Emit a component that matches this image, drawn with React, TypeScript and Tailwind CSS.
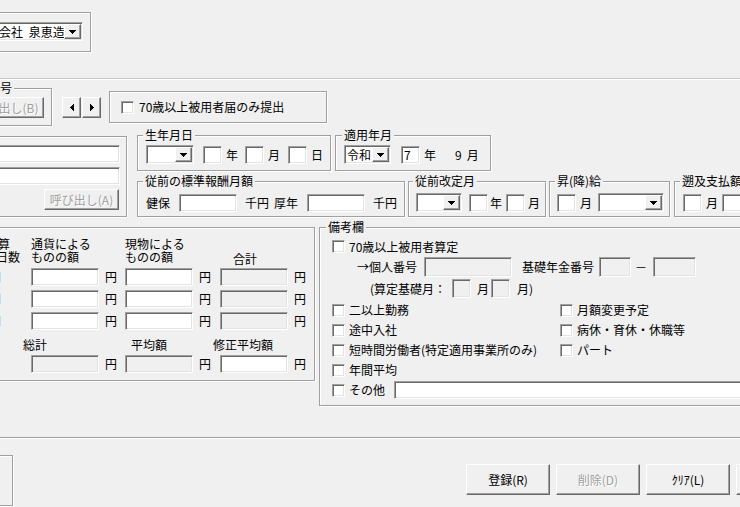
import React from 'react';

const SUNKEN =
  'border border-t-[#a0a0a0] border-l-[#a0a0a0] border-r-white border-b-white shadow-[inset_1px_1px_0_#696969,inset_-1px_-1px_0_#e3e3e3]';
const RAISED =
  'border border-t-white border-l-white border-r-[#696969] border-b-[#696969] shadow-[inset_-1px_-1px_0_#a0a0a0]';
const ETCHED = 'border border-[#a0a0a0] shadow-[inset_1px_1px_0_#fff,1px_1px_0_#fff]';
const DISABLED = 'text-[#a0a0a0] [text-shadow:1px_1px_0_#fff]';

function Tri({ dir }: { dir: 'down' | 'left' | 'right' }) {
  if (dir === 'down')
    return (
      <svg width="7" height="4" viewBox="0 0 7 4" shapeRendering="crispEdges">
        <path d="M0 0h7v1H0zM1 1h5v1H1zM2 2h3v1H2zM3 3h1v1H3z" fill="#000" />
      </svg>
    );
  if (dir === 'left')
    return (
      <svg width="4" height="7" viewBox="0 0 4 7" shapeRendering="crispEdges">
        <path d="M3 0h1v7H3zM2 1h1v5H2zM1 2h1v3H1zM0 3h1v1H0z" fill="#000" />
      </svg>
    );
  return (
    <svg width="4" height="7" viewBox="0 0 4 7" shapeRendering="crispEdges">
      <path d="M0 0h1v7H0zM1 1h1v5H1zM2 2h1v3H2zM3 3h1v1H3z" fill="#000" />
    </svg>
  );
}

function Field({ className = '', gray = false, children }: { className?: string; gray?: boolean; children?: React.ReactNode }) {
  return (
    <div className={`shrink-0 flex items-center pl-[2px] ${gray ? 'bg-[#f0f0f0]' : 'bg-white'} ${SUNKEN} ${className}`}>
      {children}
    </div>
  );
}

function Check() {
  return <div className={`shrink-0 w-[13px] h-[13px] bg-white ${SUNKEN}`} />;
}

function Combo({ className = '', text, textClass = 'pl-[1px]' }: { className?: string; text?: string; textClass?: string }) {
  return (
    <div className={`shrink-0 flex bg-white p-[1px] ${SUNKEN} ${className}`}>
      <div className={`flex-1 flex items-center overflow-hidden whitespace-nowrap ${textClass}`}>{text}</div>
      <div className={`w-[17px] flex items-center justify-center bg-[#f0f0f0] ${RAISED}`}>
        <Tri dir="down" />
      </div>
    </div>
  );
}

function Group({
  legend,
  legendLeft = 'left-[5px]',
  className = '',
  children,
}: {
  legend?: string;
  legendLeft?: string;
  className?: string;
  children?: React.ReactNode;
}) {
  return (
    <div className={`relative shrink-0 ${ETCHED} ${className}`}>
      {legend && (
        <span className={`absolute -top-[7px] ${legendLeft} px-[2px] bg-[#f0f0f0] whitespace-nowrap leading-[12px]`}>
          {legend}
        </span>
      )}
      {children}
    </div>
  );
}

function CheckItem({ label }: { label: string }) {
  return (
    <div className="flex items-center">
      <Check />
      <span className="ml-[4px] whitespace-nowrap">{label}</span>
    </div>
  );
}

function AmountRow({ mark, cells }: { mark?: string; cells: [boolean, boolean, boolean] }) {
  return (
    <div className="flex items-center h-[18px]">
      <div className="w-[50px] shrink-0 pl-[9px]">{mark}</div>
      <Field gray={cells[0]} className="w-[68px] h-[18px]" />
      <span className="w-[26px] shrink-0 pl-[6px]">円</span>
      <Field gray={cells[1]} className="w-[68px] h-[18px]" />
      <span className="w-[27px] shrink-0 pl-[6px]">円</span>
      <Field gray={cells[2]} className="w-[68px] h-[18px]" />
      <span className="shrink-0 pl-[6px]">円</span>
    </div>
  );
}

export default function App() {
  return (
    <div className="w-[740px] h-[507px] overflow-hidden bg-[#f0f0f0] text-black text-[12px] leading-[12px] font-['Noto_Sans_CJK_JP','Noto_Sans',sans-serif]">
      {/* company */}
      <div className="h-[78px] pt-[12px]">
        <Group className="ml-[-10px] w-[101px] h-[40px] pt-[9px]">
          <Combo className="ml-[-21px] w-[113px] h-[19px]" text="株式会社 泉恵造" textClass="pl-[3px] [word-spacing:3px]" />
        </Group>
      </div>
      <div className="h-[2px] border-t border-t-[#c8c8c8] border-b border-b-white" />

      {/* search row */}
      <div className="h-[50px] flex items-start">
        <Group legend="番号" legendLeft="left-[5px]" className="mt-[8px] ml-[-20px] w-[72px] h-[38px] pt-[8px]">
          <button className={`ml-[-12px] w-[75px] h-[21px] bg-[#f0f0f0] ${RAISED} ${DISABLED}`}>呼び出し(B)</button>
        </Group>
        <div className="mt-[17px] ml-[10px] flex gap-[1px] shrink-0">
          <button className={`w-[19px] h-[21px] flex items-center justify-center bg-[#f0f0f0] ${RAISED}`}>
            <Tri dir="left" />
          </button>
          <button className={`w-[19px] h-[21px] flex items-center justify-center bg-[#f0f0f0] ${RAISED}`}>
            <Tri dir="right" />
          </button>
        </div>
        <Group className="mt-[11px] ml-[8px] w-[218px] h-[32px] flex items-center pl-[11px]">
          <Check />
          <span className="ml-[5px] whitespace-nowrap">70歳以上被用者届のみ提出</span>
        </Group>
      </div>

      {/* person row */}
      <div className="h-[90px] flex items-start">
        <Group className="mt-[6px] ml-[-20px] w-[147px] h-[81px] flex flex-col items-end pr-[6px] pt-[8px]">
          <Field className="w-[130px] h-[18px]" />
          <Field className="mt-[4px] w-[130px] h-[18px]" />
          <button className={`mt-[4px] mr-[1px] w-[75px] h-[21px] bg-[#f0f0f0] ${RAISED} ${DISABLED}`}>呼び出し(A)</button>
        </Group>
        <div className="ml-[10px] flex flex-col shrink-0">
          <div className="flex mt-[5px]">
            <Group legend="生年月日" className="w-[194px] h-[36px] pl-[8px] pt-[9px]">
              <div className="flex items-center h-[19px]">
                <Combo className="w-[48px] h-[19px]" />
                <Field className="ml-[9px] w-[19px] h-[18px]" />
                <span className="ml-[4px]">年</span>
                <Field className="ml-[7px] w-[19px] h-[18px]" />
                <span className="ml-[4px]">月</span>
                <Field className="ml-[8px] w-[19px] h-[18px]" />
                <span className="ml-[4px]">日</span>
              </div>
            </Group>
            <Group legend="適用年月" legendLeft="left-[6px]" className="ml-[4px] w-[156px] h-[36px] pl-[8px] pt-[9px]">
              <div className="flex items-center h-[19px]">
                <Combo className="w-[47px] h-[19px]" text="令和" />
                <Field className="ml-[10px] w-[19px] h-[18px]">7</Field>
                <span className="ml-[4px]">年</span>
                <span className="ml-[19px]">9</span>
                <span className="ml-[5px]">月</span>
              </div>
            </Group>
          </div>
          <div className="flex mt-[10px]">
            <Group legend="従前の標準報酬月額" className="w-[268px] h-[36px] pl-[8px] pt-[11px]">
              <div className="flex items-center h-[19px]">
                <span>健保</span>
                <Field className="ml-[9px] w-[58px] h-[18px]" />
                <span className="ml-[8px]">千円</span>
                <span className="ml-[5px]">厚年</span>
                <Field className="ml-[9px] w-[58px] h-[18px]" />
                <span className="ml-[8px]">千円</span>
              </div>
            </Group>
            <Group legend="従前改定月" legendLeft="left-[4px]" className="ml-[3px] w-[138px] h-[36px] pl-[7px] pt-[11px]">
              <div className="flex items-center h-[19px]">
                <Combo className="w-[46px] h-[19px]" />
                <Field className="ml-[7px] w-[19px] h-[18px]" />
                <span className="ml-[2px]">年</span>
                <Field className="ml-[4px] w-[19px] h-[18px]" />
                <span className="ml-[3px]">月</span>
              </div>
            </Group>
            <Group legend="昇(降)給" className="ml-[3px] w-[121px] h-[36px] pl-[7px] pt-[11px]">
              <div className="flex items-center h-[19px]">
                <Field className="w-[19px] h-[18px]" />
                <span className="ml-[4px]">月</span>
                <Combo className="ml-[6px] w-[66px] h-[19px]" />
              </div>
            </Group>
            <Group legend="遡及支払額" className="ml-[4px] w-[120px] h-[36px] pl-[8px] pt-[11px]">
              <div className="flex items-center h-[19px]">
                <Field className="w-[19px] h-[18px]" />
                <span className="ml-[4px]">月</span>
                <Field className="ml-[4px] w-[40px] h-[18px]" />
              </div>
            </Group>
          </div>
        </div>
      </div>

      {/* amounts + remarks */}
      <div className="h-[217px] flex items-start">
        <Group className="mt-[7px] ml-[-20px] w-[335px] h-[154px] pt-[9px]">
          <div className="flex leading-[13px] whitespace-nowrap">
            <div className="w-[50px] shrink-0">
              <div className="pl-[17px]">算</div>
              <div className="pl-[15px]">日数</div>
            </div>
            <div className="w-[94px] shrink-0">
              <div>通貨による</div>
              <div>ものの額</div>
            </div>
            <div className="w-[108px] shrink-0">
              <div>現物による</div>
              <div>ものの額</div>
            </div>
            <div className="shrink-0 pt-[15px]">合計</div>
          </div>
          <div className="mt-[3px] flex flex-col gap-[4px]">
            <AmountRow mark="月" cells={[false, false, true]} />
            <AmountRow mark="月" cells={[false, false, true]} />
            <AmountRow mark="月" cells={[false, false, true]} />
          </div>
          <div className="mt-[9px] flex whitespace-nowrap">
            <span className="w-[150px] shrink-0 pl-[42px]">総計</span>
            <span className="w-[82px] shrink-0">平均額</span>
            <span className="shrink-0">修正平均額</span>
          </div>
          <div className="mt-[4px]">
            <AmountRow cells={[true, true, false]} />
          </div>
        </Group>

        <Group legend="備考欄" legendLeft="left-[6px]" className="mt-[7px] ml-[4px] w-[440px] h-[179px] pt-[12px]">
          <div className="pl-[12px] h-[13px] flex items-center">
            <CheckItem label="70歳以上被用者算定" />
          </div>
          <div className="mt-[4px] h-[20px] flex items-center whitespace-nowrap">
            <span className="pl-[37px] shrink-0">→個人番号</span>
            <Field gray className="ml-[7px] w-[88px] h-[20px]" />
            <span className="ml-[10px] shrink-0">基礎年金番号</span>
            <Field gray className="ml-[5px] w-[32px] h-[20px]" />
            <span className="ml-[4px] shrink-0">－</span>
            <Field gray className="ml-[6px] w-[43px] h-[20px]" />
          </div>
          <div className="mt-[2px] h-[19px] flex items-center whitespace-nowrap">
            <span className="w-[132px] pl-[50px] shrink-0">(算定基礎月：</span>
            <Field gray className="w-[19px] h-[19px]" />
            <span className="ml-[6px] shrink-0">月</span>
            <Field gray className="ml-[2px] w-[19px] h-[19px]" />
            <span className="ml-[7px] shrink-0">月)</span>
          </div>
          <div className="mt-[2px] pl-[12px] flex flex-col">
            <div className="h-[20px] flex items-center">
              <div className="w-[228px] shrink-0"><CheckItem label="二以上勤務" /></div>
              <CheckItem label="月額変更予定" />
            </div>
            <div className="h-[20px] flex items-center">
              <div className="w-[228px] shrink-0"><CheckItem label="途中入社" /></div>
              <CheckItem label="病休・育休・休職等" />
            </div>
            <div className="h-[20px] flex items-center">
              <div className="w-[228px] shrink-0"><CheckItem label="短時間労働者(特定適用事業所のみ)" /></div>
              <CheckItem label="パート" />
            </div>
            <div className="h-[20px] flex items-center">
              <CheckItem label="年間平均" />
            </div>
            <div className="h-[20px] flex items-center">
              <CheckItem label="その他" />
              <Field className="ml-[9px] w-[400px] h-[18px]" />
            </div>
          </div>
        </Group>
      </div>

      <div className="h-[2px] border-t border-t-[#a0a0a0] border-b border-b-white" />

      {/* footer */}
      <div className="h-[68px] flex items-start">
        <div className={`mt-[16px] ml-[-20px] w-[33px] h-[51px] shrink-0 ${ETCHED}`} />
        <div className="mt-[25px] ml-[453px] flex gap-[6px] shrink-0">
          <button className={`w-[84px] h-[31px] bg-[#f0f0f0] ${RAISED}`}>登録(R)</button>
          <button className={`w-[84px] h-[31px] bg-[#f0f0f0] ${RAISED} ${DISABLED}`}>削除(D)</button>
          <button className={`w-[84px] h-[31px] bg-[#f0f0f0] ${RAISED}`}>ｸﾘｱ(L)</button>
          <button className={`w-[84px] h-[31px] bg-[#f0f0f0] ${RAISED}`}>終了(X)</button>
        </div>
      </div>
    </div>
  );
}
